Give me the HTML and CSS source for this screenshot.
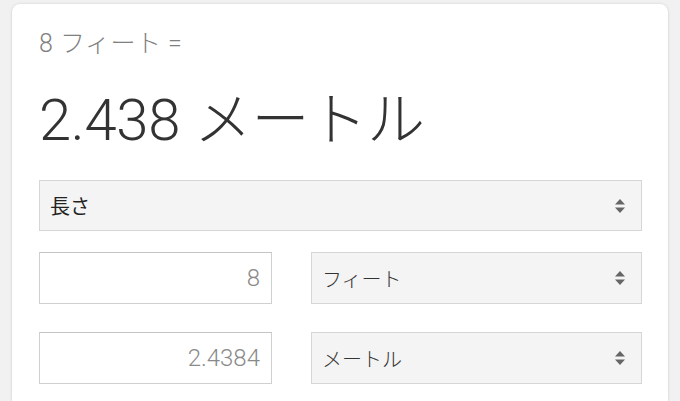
FILE: index.html
```html
<!DOCTYPE html>
<html lang="ja">
<head>
<meta charset="utf-8">
<link rel="stylesheet" href="styles.css">
</head>
<body>
<div class="card">
  <div class="query">8 フィート =</div>
  <div class="result">2.438 メートル</div>
  <div class="select wide"><span>長さ</span><svg class="arrows" width="10" height="16" viewBox="0 0 10 16"><path d="M5 1 L10 6.5 L0 6.5 Z M0 9.5 L10 9.5 L5 15 Z" fill="#666"/></svg></div>
  <div class="row">
    <div class="input">8</div>
    <div class="select"><span>フィート</span><svg class="arrows" width="10" height="16" viewBox="0 0 10 16"><path d="M5 1 L10 6.5 L0 6.5 Z M0 9.5 L10 9.5 L5 15 Z" fill="#666"/></svg></div>
  </div>
  <div class="row">
    <div class="input">2.4384</div>
    <div class="select"><span>メートル</span><svg class="arrows" width="10" height="16" viewBox="0 0 10 16"><path d="M5 1 L10 6.5 L0 6.5 Z M0 9.5 L10 9.5 L5 15 Z" fill="#666"/></svg></div>
  </div>
</div>
</body>
</html>
```
FILE: styles.css
```css
html, body {
  margin: 0;
  padding: 0;
  background: #f1f1f1;
  height: 401px;
  overflow: hidden;
}
body {
  font-family: Roboto, "Noto Sans CJK JP", sans-serif;
}
.card {
  margin: 4px 12px 0 12px;
  width: 656px;
  box-sizing: border-box;
  height: 397px;
  background: #fff;
  border-radius: 8px 8px 0 0;
  box-shadow: 0 0 3px rgba(0,0,0,0.12), 0 1px 2px rgba(0,0,0,0.08);
  padding: 28px 26px 0 27px;
  overflow: hidden;
}
.query {
  font-size: 25px;
  line-height: 24px;
  color: #808080;
  font-weight: 300;
  letter-spacing: 0.5px;
}
.result {
  margin-top: 29px;
  font-size: 58px;
  line-height: 70px;
  color: #333;
  font-weight: 300;
  letter-spacing: -0.3px;
}
.select {
  display: flex;
  align-items: center;
  justify-content: space-between;
  box-sizing: border-box;
  height: 51px;
  border: 1px solid #d6d6d6;
  background: #f4f4f4;
  padding: 0 16px 0 10px;
  font-size: 20px;
  color: #333;
}
.select.wide {
  margin-top: 25px;
}
.select.wide span {
  color: #222;
}
.row {
  display: flex;
  gap: 39px;
  margin-top: 21px;
}
.row + .row {
  margin-top: 28px;
}
.row .select {
  flex: 1;
  height: 52px;
}
.row .select span {
  font-weight: 300;
}
.input {
  width: 233px;
  box-sizing: border-box;
  height: 52px;
  border: 1px solid #d0d0d0;
  border-top-color: #c4c4c4;
  background: #fff;
  display: flex;
  align-items: center;
  justify-content: flex-end;
  padding-right: 11px;
  font-size: 24px;
  color: #8a8a8a;
  font-weight: 300;
}
.arrows {
  display: block;
}
```
